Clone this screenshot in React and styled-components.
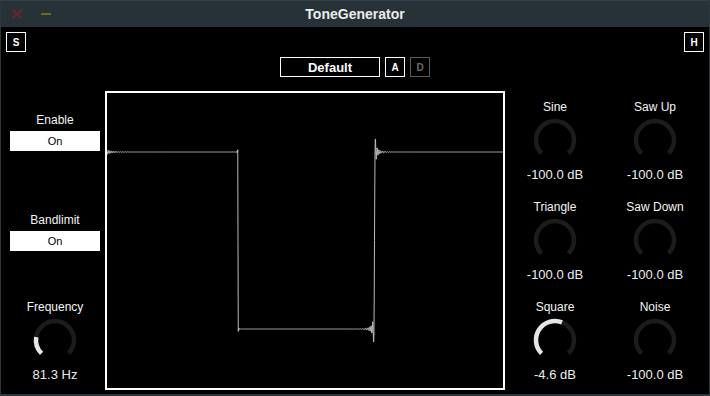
import React, { useMemo } from "react";
import styled, { createGlobalStyle } from "styled-components";

const GlobalStyle = createGlobalStyle`
  html, body {
    margin: 0;
    padding: 0;
    background: #000;
  }
  * {
    box-sizing: border-box;
  }
`;

const Window = styled.div`
  width: 710px;
  height: 396px;
  display: flex;
  flex-direction: column;
  background: #000;
  border-left: 1px solid #2b373d;
  border-right: 1px solid #2b373d;
  border-bottom: 2px solid #2b373d;
  font-family: "Liberation Sans", Arial, sans-serif;
  color: #f2f2f2;
  overflow: hidden;
`;

const TitleBar = styled.div`
  height: 27px;
  flex: none;
  display: flex;
  align-items: center;
  background: #263238;
  border-top: 1px solid #334048;
  position: relative;
`;

const TitleButtons = styled.div`
  display: flex;
  align-items: center;
  gap: 17px;
  padding-left: 10px;
`;

const Title = styled.div`
  position: absolute;
  left: 0;
  right: 0;
  text-align: center;
  font-size: 14px;
  font-weight: bold;
  color: #ececec;
  pointer-events: none;
`;

const Content = styled.div`
  flex: 1;
  display: flex;
  flex-direction: column;
`;

const HeaderRow = styled.div`
  display: flex;
  justify-content: space-between;
  padding: 5px 5px 0 5px;
`;

const SmallButton = styled.div`
  width: 20px;
  height: 20px;
  display: flex;
  align-items: center;
  justify-content: center;
  border: 1px solid ${(p) => (p.disabled ? "#5a5a5a" : "#fff")};
  color: ${(p) => (p.disabled ? "#6a6a6a" : "#fff")};
  font-size: 10px;
  font-weight: bold;
`;

const PresetRow = styled.div`
  display: flex;
  justify-content: center;
  gap: 5px;
  margin-top: 5px;
`;

const PresetBox = styled.div`
  width: 100px;
  height: 20px;
  border: 1px solid #fff;
  display: flex;
  align-items: center;
  justify-content: center;
  font-size: 13px;
  font-weight: bold;
  color: #fff;
`;

const MainRow = styled.div`
  display: flex;
  margin-top: 14px;
`;

const LeftColumn = styled.div`
  width: 104px;
  padding-left: 4px;
  display: flex;
  flex-direction: column;
`;

const ToggleSection = styled.div`
  height: 100px;
  display: flex;
  flex-direction: column;
  align-items: center;
  padding-top: 20px;
  gap: 2px;
`;

const Label = styled.div`
  font-size: 12px;
  line-height: 16px;
  color: #f4f4f4;
  white-space: nowrap;
`;

const ToggleLabel = styled(Label)`
  line-height: 18px;
`;

const Toggle = styled.div`
  width: 90px;
  height: 20px;
  background: #fff;
  color: #000;
  font-size: 11px;
  display: flex;
  align-items: center;
  justify-content: center;
`;

const Plot = styled.div`
  width: 400px;
  height: 299px;
  border: 2px solid #fff;
  flex: none;
`;

const KnobGrid = styled.div`
  display: grid;
  grid-template-columns: 100px 100px;
  grid-auto-rows: 100px;
`;

const KnobSection = styled.div`
  height: 100px;
  display: flex;
  flex-direction: column;
  align-items: center;
  padding-top: 8px;
`;

const KnobValue = styled.div`
  font-size: 13px;
  line-height: 18px;
  margin-top: 1px;
  color: #ececec;
  white-space: nowrap;
`;

const polar = (cx, cy, r, deg) => {
  const a = (deg * Math.PI) / 180;
  return [cx + r * Math.sin(a), cy - r * Math.cos(a)];
};

const arcPath = (cx, cy, r, from, to) => {
  const [x1, y1] = polar(cx, cy, r, from);
  const [x2, y2] = polar(cx, cy, r, to);
  const large = to - from > 180 ? 1 : 0;
  return `M ${x1} ${y1} A ${r} ${r} 0 ${large} 1 ${x2} ${y2}`;
};

const Knob = ({ label, value, text }) => {
  const start = -135;
  const end = 135;
  const pos = start + (end - start) * value;
  return (
    <KnobSection>
      <Label>{label}</Label>
      <svg width="50" height="50" viewBox="0 0 50 50">
        <path
          d={arcPath(25, 25, 19, start, end)}
          fill="none"
          stroke="#1c1c1c"
          strokeWidth="4.5"
        />
        {value > 0.005 && (
          <path
            d={arcPath(25, 25, 19, start, pos)}
            fill="none"
            stroke="#e6e6e6"
            strokeWidth="4.5"
          />
        )}
      </svg>
      <KnobValue>{text}</KnobValue>
    </KnobSection>
  );
};

// sine integral, series for small z, asymptotic for large
const si = (z) => {
  const sgn = z < 0 ? -1 : 1;
  const a = Math.abs(z);
  if (a < 12) {
    let term = a;
    let sum = a;
    for (let n = 1; n < 40; n++) {
      term *= (-a * a) / ((2 * n) * (2 * n + 1));
      sum += term / (2 * n + 1);
    }
    return sgn * sum;
  }
  const v = Math.PI / 2 - Math.cos(a) / a - Math.sin(a) / (a * a);
  return sgn * v;
};

// band-limited step 0 -> 1, ringing damped away from the edge
const step = (d, w, tau) => {
  const hard = d >= 0 ? 1 : 0;
  const soft = 0.5 + si(w * d) / Math.PI;
  return hard + (soft - hard) * Math.exp(-Math.abs(d) / tau);
};

const Waveform = () => {
  const d = useMemo(() => {
    const mid = 147.5;
    const amp = 88.5;
    const pts = [];
    for (let x = 0; x <= 396; x += 0.25) {
      const g =
        -1 +
        2 *
          (step(x + 5, 3.6, 20) -
            step(x - 131, 60, 2) +
            step(x - 267.5, 3.6, 10) -
            step(x - 403, 60, 2));
      pts.push(`${x.toFixed(2)},${(mid - amp * g).toFixed(2)}`);
    }
    return "M " + pts.join(" L ");
  }, []);
  return (
    <svg width="396" height="295" viewBox="0 0 396 295">
      <path d={d} fill="none" stroke="#bdbdbd" strokeWidth="1" />
    </svg>
  );
};

const CloseIcon = () => (
  <svg width="12" height="12" viewBox="0 0 12 12">
    <path d="M1.5 1.5 L10.5 10.5 M10.5 1.5 L1.5 10.5" stroke="#7c2226" strokeWidth="1.6" />
  </svg>
);

const MinimizeIcon = () => (
  <svg width="12" height="12" viewBox="0 0 12 12">
    <path d="M1 6 L11 6" stroke="#6f6a1c" strokeWidth="2" />
  </svg>
);

const App = () => {
  return (
    <>
      <GlobalStyle />
      <Window>
        <TitleBar>
          <TitleButtons>
            <CloseIcon />
            <MinimizeIcon />
          </TitleButtons>
          <Title>ToneGenerator</Title>
        </TitleBar>
        <Content>
          <HeaderRow>
            <SmallButton>S</SmallButton>
            <SmallButton>H</SmallButton>
          </HeaderRow>
          <PresetRow>
            <PresetBox>Default</PresetBox>
            <SmallButton>A</SmallButton>
            <SmallButton disabled>D</SmallButton>
          </PresetRow>
          <MainRow>
            <LeftColumn>
              <ToggleSection>
                <ToggleLabel>Enable</ToggleLabel>
                <Toggle>On</Toggle>
              </ToggleSection>
              <ToggleSection>
                <ToggleLabel>Bandlimit</ToggleLabel>
                <Toggle>On</Toggle>
              </ToggleSection>
              <Knob label="Frequency" value={0.2} text="81.3 Hz" />
            </LeftColumn>
            <Plot>
              <Waveform />
            </Plot>
            <KnobGrid>
              <Knob label="Sine" value={0} text="-100.0 dB" />
              <Knob label="Saw Up" value={0} text="-100.0 dB" />
              <Knob label="Triangle" value={0} text="-100.0 dB" />
              <Knob label="Saw Down" value={0} text="-100.0 dB" />
              <Knob label="Square" value={0.58} text="-4.6 dB" />
              <Knob label="Noise" value={0} text="-100.0 dB" />
            </KnobGrid>
          </MainRow>
        </Content>
      </Window>
    </>
  );
};

export default App;
